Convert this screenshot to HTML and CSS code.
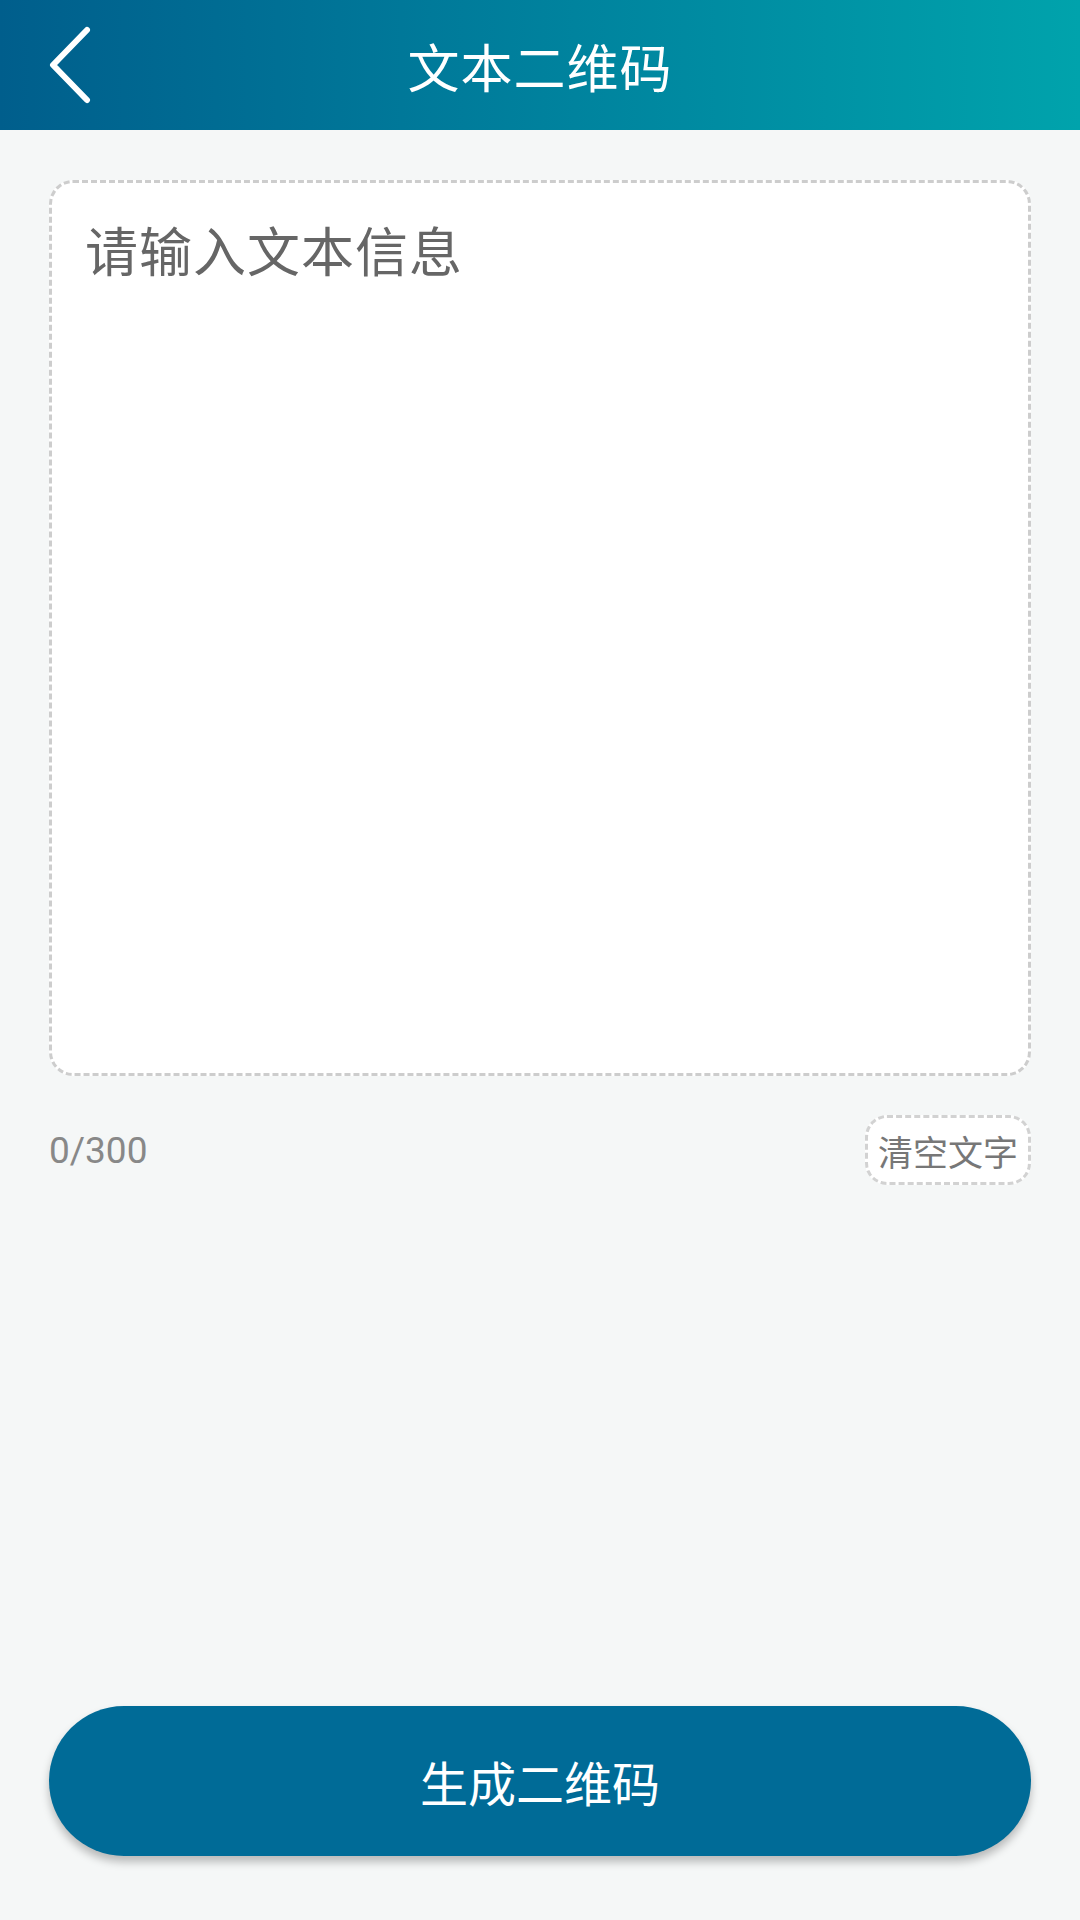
FILE: index.html
```html
<!DOCTYPE html>
<html lang="zh-CN">
<head>
    <meta charset="UTF-8">
    <meta name="viewport" content="width=device-width, initial-scale=1.0">
    <title>文本二维码</title>
    <link rel="stylesheet" href="styles.css">
</head>
<body>
    <header class="app-bar">
        <button class="back" aria-label="返回">
            <svg width="46" height="78" viewBox="0 0 46 78">
                <path d="M39 4 L5 39 L39 74" fill="none" stroke="#fff" stroke-width="6" stroke-linecap="round" stroke-linejoin="round"/>
            </svg>
        </button>
        <h1>文本二维码</h1>
        <span></span>
    </header>
    <main class="content">
        <textarea class="text-input" id="text" maxlength="300" placeholder="请输入文本信息"></textarea>
        <div class="meta">
            <span class="count" id="count">0/300</span>
            <button class="clear" id="clear">清空文字</button>
        </div>
        <div class="spacer"></div>
        <button class="generate">生成二维码</button>
    </main>
    <script>
        const textInput = document.getElementById('text');
        const countLabel = document.getElementById('count');
        const clearButton = document.getElementById('clear');

        function updateCount() {
            countLabel.textContent = `${textInput.value.length}/300`;
        }

        textInput.addEventListener('input', updateCount);
        clearButton.addEventListener('click', () => {
            textInput.value = '';
            updateCount();
        });
    </script>
</body>
</html>
```

FILE: styles.css
```css
* {
    box-sizing: border-box;
}

body {
    margin: 0;
    height: 1920px;
    display: flex;
    flex-direction: column;
    background: #f5f7f7;
    font-family: Roboto, "Noto Sans CJK SC", sans-serif;
}

.app-bar {
    height: 130px;
    flex-shrink: 0;
    display: grid;
    grid-template-columns: 1fr auto 1fr;
    align-items: center;
    background: linear-gradient(90deg, #005e8c 0%, #007a9a 40%, #00a3ac 100%);
}

.back {
    justify-self: start;
    margin-left: 48px;
    padding: 0;
    border: none;
    background: none;
    display: flex;
}

.app-bar h1 {
    margin: 0;
    color: #fff;
    font-family: "Noto Sans CJK SC", sans-serif;
    font-weight: 400;
    font-size: 52px;
    letter-spacing: 1px;
}

.content {
    flex: 1;
    display: flex;
    flex-direction: column;
    padding: 50px 49px 64px;
}

.text-input {
    height: 896px;
    width: 100%;
    resize: none;
    border: 3px dashed #cdcdcd;
    border-radius: 24px;
    background: #fff;
    padding: 32px 33px;
    font-family: "Noto Sans CJK SC", sans-serif;
    font-size: 53px;
    line-height: 1.3;
    letter-spacing: 1px;
    color: #333;
    outline: none;
}

.text-input::placeholder {
    color: #666;
}

.meta {
    margin-top: 39px;
    display: flex;
    justify-content: space-between;
    align-items: center;
}

.count {
    font-size: 37px;
    color: #888;
}

.clear {
    width: 166px;
    height: 70px;
    padding: 0;
    border: 3px dashed #d2d2d2;
    border-radius: 22px;
    background: #fff;
    font-family: "Noto Sans CJK SC", sans-serif;
    font-size: 35px;
    color: #777;
}

.spacer {
    flex: 1;
}

.generate {
    height: 150px;
    width: 100%;
    border: none;
    border-radius: 75px;
    background: #006b97;
    color: #fff;
    font-family: "Noto Sans CJK SC", sans-serif;
    font-size: 48px;
    box-shadow: 0 6px 8px rgba(0, 0, 0, 0.25);
}
```
